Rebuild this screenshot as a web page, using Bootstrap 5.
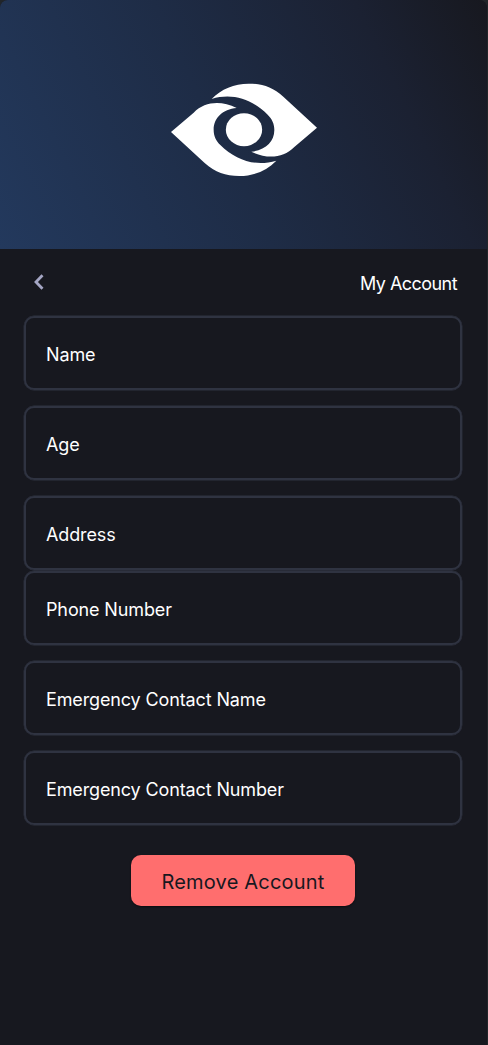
<!DOCTYPE html>
<html lang="en">
<head>
<meta charset="utf-8">
<meta name="viewport" content="width=device-width, initial-scale=1">
<title>My Account</title>
<link href="https://cdn.jsdelivr.net/npm/bootstrap@5.3.0/dist/css/bootstrap.min.css" rel="stylesheet">
<style>
body{background:#212529;font-family:Inter,"Open Sans",sans-serif;color:#fff}
.screen{width:487px;height:1045px;background:#17181f;border-radius:8px 8px 0 0}
.hero{height:249px;background:linear-gradient(64deg,#23395d 0%,#1e2c46 45%,#1b2132 78%,#17181f 100%)}
.hero svg{margin-top:11px;margin-left:3px}
.topbar{height:67px;padding:0 30px 0 33px}
.back{width:12px;height:18px;margin-top:-2px}
.title{font-size:18px;font-weight:400;line-height:24px;letter-spacing:-.55px;margin-top:2px}
.fields{gap:16px;padding-left:24px}
.field{height:74px;width:438px;box-shadow:inset 0 0 0 2px #2f3341,0 0 0 .4px #2f3341;border-radius:10px;font-size:18px;line-height:24px;padding:4px 22px 0;letter-spacing:-.13px}
.field.joined{margin-top:-15px}
.remove,.remove:hover{width:224px;height:51px;margin:30px 1px 0 0;border-radius:10px;background:#ff6e6e;color:#17181f;font-size:20px;letter-spacing:.2px;padding:2px 0 0;border:0;box-shadow:0 1px 2px #0008}
</style>
</head>
<body>
<main class="screen overflow-hidden">
  <header class="hero d-flex align-items-center justify-content-center">
    <svg width="170" height="120" viewBox="0 0 510 360" fill="#fff" aria-hidden="true">
      <defs><path id="lid" d="M155 87C184 57 222 41 266 41C308 41 338 52 370 80L471 173L403 231C369 265 321 268 274 245C316 241 343 215 343 180C343 161 336 147 323 134C276 88 218 68 155 87Z"/></defs>
      <use href="#lid"/>
      <use href="#lid" transform="rotate(180 252 179.5)"/>
      <ellipse cx="252" cy="179" rx="54.500" ry="49.500"/>
    </svg>
  </header>
  <nav class="topbar d-flex align-items-center justify-content-between">
    <svg class="back" viewBox="0 0 12 18" fill="none" stroke="#a5a6c4" stroke-width="2.8"><path d="M9.500 2.300L3 9L9.500 15.700"/></svg>
    <h1 class="title mb-0">My Account</h1>
  </nav>
  <form class="fields d-flex flex-column">
    <label class="field d-flex align-items-center"><span>Name</span></label>
    <label class="field d-flex align-items-center"><span>Age</span></label>
    <label class="field d-flex align-items-center"><span>Address</span></label>
    <label class="field joined d-flex align-items-center"><span>Phone Number</span></label>
    <label class="field d-flex align-items-center"><span>Emergency Contact Name</span></label>
    <label class="field d-flex align-items-center"><span>Emergency Contact Number</span></label>
  </form>
  <div class="text-center"><button class="remove btn" type="button">Remove Account</button></div>
</main>
<script src="https://cdn.jsdelivr.net/npm/bootstrap@5.3.0/dist/js/bootstrap.bundle.min.js"></script>
</body>
</html>
